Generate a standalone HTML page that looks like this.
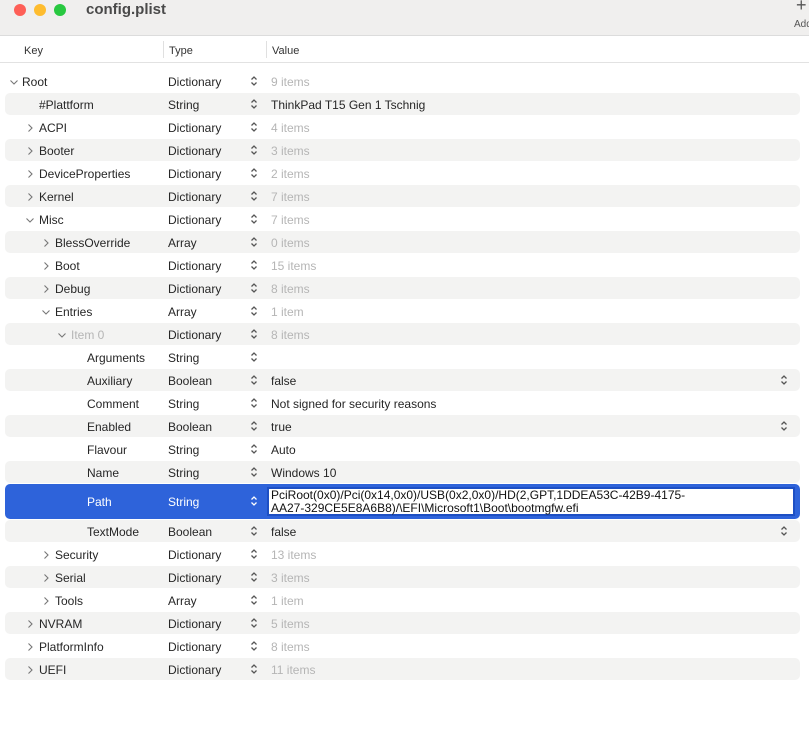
<!DOCTYPE html>
<html><head><meta charset="utf-8"><style>
*{margin:0;padding:0;box-sizing:border-box}
body{width:809px;height:736px;background:#fff;font-family:"Liberation Sans",sans-serif;font-size:12px;color:#262626;position:relative;overflow:hidden}
.tb{position:absolute;left:0;top:0;width:809px;height:36px;background:#f0efee;border-bottom:1px solid #dcdcdc}
.dot{position:absolute;top:4px;width:12px;height:12px;border-radius:50%}
.title{position:absolute;left:86px;top:1px;font-size:15px;font-weight:bold;color:#4a4a4a}
.hdr{position:absolute;top:37px;left:0;width:809px;height:26px;border-bottom:1px solid #e2e2e2}
.hdr span{position:absolute;top:7px;font-size:11px;color:#333}
.sep{position:absolute;top:4px;width:1px;height:17px;background:#e0e0e0}
.r{position:absolute;left:5px;width:795px;height:22px}
.g{background:#f3f3f2;border-radius:5px}
.r span{position:absolute;top:5px;white-space:nowrap}
.t{left:163px}
.v{left:266px}
.gr{color:#b5b5b5}
.ar{position:absolute;top:7px;width:10px;height:10px}
.st{position:absolute;left:245px;top:5px}
.dd{position:absolute;left:775px;top:5px}
</style></head><body>
<div class="tb">
<div class="dot" style="left:14px;background:#fe5f57"></div>
<div class="dot" style="left:34px;background:#febc2e"></div>
<div class="dot" style="left:54px;background:#28c840"></div>
<div class="title">config.plist</div>
<div style="position:absolute;left:796px;top:-5px;font-size:18px;color:#555">+</div>
<div style="position:absolute;left:794px;top:19px;font-size:10px;color:#555">Add</div>
</div>
<div class="hdr"><span style="left:24px;top:8px">Key</span><div class="sep" style="left:163px"></div><span style="left:169px;top:8px">Type</span><div class="sep" style="left:266px"></div><span style="left:272px;top:8px">Value</span></div>

<svg width="0" height="0" style="position:absolute"><defs>
<symbol id="s" viewBox="0 0 8 12"><path d="M1.5 4.5L4 2L6.5 4.5M1.5 7.5L4 10L6.5 7.5" fill="none" stroke="#555" stroke-width="1.3"/></symbol>
<symbol id="w" viewBox="0 0 8 12"><path d="M1.5 4.5L4 2L6.5 4.5M1.5 7.5L4 10L6.5 7.5" fill="none" stroke="#fff" stroke-width="1.3"/></symbol>
<symbol id="c" viewBox="0 0 10 10"><path d="M3.5 1.5L7 5L3.5 8.5" fill="none" stroke="#777" stroke-width="1.1"/></symbol>
<symbol id="o" viewBox="0 0 10 10"><path d="M1.5 3.5L5 7L8.5 3.5" fill="none" stroke="#777" stroke-width="1.1"/></symbol>
</defs></svg>

<div class="r" style="top:70px"><svg class="ar" style="left:4px"><use href="#o"/></svg><span style="left:17px">Root</span><span class="t">Dictionary</span><svg class="st" width="8" height="12"><use href="#s"/></svg><span class="v gr">9 items</span></div>
<div class="r g" style="top:93px"><span style="left:34px">#Plattform</span><span class="t">String</span><svg class="st" width="8" height="12"><use href="#s"/></svg><span class="v">ThinkPad T15 Gen 1 Tschnig</span></div>
<div class="r" style="top:116px"><svg class="ar" style="left:20px"><use href="#c"/></svg><span style="left:34px">ACPI</span><span class="t">Dictionary</span><svg class="st" width="8" height="12"><use href="#s"/></svg><span class="v gr">4 items</span></div>
<div class="r g" style="top:139px"><svg class="ar" style="left:20px"><use href="#c"/></svg><span style="left:34px">Booter</span><span class="t">Dictionary</span><svg class="st" width="8" height="12"><use href="#s"/></svg><span class="v gr">3 items</span></div>
<div class="r" style="top:162px"><svg class="ar" style="left:20px"><use href="#c"/></svg><span style="left:34px">DeviceProperties</span><span class="t">Dictionary</span><svg class="st" width="8" height="12"><use href="#s"/></svg><span class="v gr">2 items</span></div>
<div class="r g" style="top:185px"><svg class="ar" style="left:20px"><use href="#c"/></svg><span style="left:34px">Kernel</span><span class="t">Dictionary</span><svg class="st" width="8" height="12"><use href="#s"/></svg><span class="v gr">7 items</span></div>
<div class="r" style="top:208px"><svg class="ar" style="left:20px"><use href="#o"/></svg><span style="left:34px">Misc</span><span class="t">Dictionary</span><svg class="st" width="8" height="12"><use href="#s"/></svg><span class="v gr">7 items</span></div>
<div class="r g" style="top:231px"><svg class="ar" style="left:36px"><use href="#c"/></svg><span style="left:50px">BlessOverride</span><span class="t">Array</span><svg class="st" width="8" height="12"><use href="#s"/></svg><span class="v gr">0 items</span></div>
<div class="r" style="top:254px"><svg class="ar" style="left:36px"><use href="#c"/></svg><span style="left:50px">Boot</span><span class="t">Dictionary</span><svg class="st" width="8" height="12"><use href="#s"/></svg><span class="v gr">15 items</span></div>
<div class="r g" style="top:277px"><svg class="ar" style="left:36px"><use href="#c"/></svg><span style="left:50px">Debug</span><span class="t">Dictionary</span><svg class="st" width="8" height="12"><use href="#s"/></svg><span class="v gr">8 items</span></div>
<div class="r" style="top:300px"><svg class="ar" style="left:36px"><use href="#o"/></svg><span style="left:50px">Entries</span><span class="t">Array</span><svg class="st" width="8" height="12"><use href="#s"/></svg><span class="v gr">1 item</span></div>
<div class="r g" style="top:323px"><svg class="ar" style="left:52px"><use href="#o"/></svg><span class="gr" style="left:66px">Item 0</span><span class="t">Dictionary</span><svg class="st" width="8" height="12"><use href="#s"/></svg><span class="v gr">8 items</span></div>
<div class="r" style="top:346px"><span style="left:82px">Arguments</span><span class="t">String</span><svg class="st" width="8" height="12"><use href="#s"/></svg></div>
<div class="r g" style="top:369px"><span style="left:82px">Auxiliary</span><span class="t">Boolean</span><svg class="st" width="8" height="12"><use href="#s"/></svg><span class="v">false</span><svg class="dd" width="8" height="12"><use href="#s"/></svg></div>
<div class="r" style="top:392px"><span style="left:82px">Comment</span><span class="t">String</span><svg class="st" width="8" height="12"><use href="#s"/></svg><span class="v">Not signed for security reasons</span></div>
<div class="r g" style="top:415px"><span style="left:82px">Enabled</span><span class="t">Boolean</span><svg class="st" width="8" height="12"><use href="#s"/></svg><span class="v">true</span><svg class="dd" width="8" height="12"><use href="#s"/></svg></div>
<div class="r" style="top:438px"><span style="left:82px">Flavour</span><span class="t">String</span><svg class="st" width="8" height="12"><use href="#s"/></svg><span class="v">Auto</span></div>
<div class="r g" style="top:461px"><span style="left:82px">Name</span><span class="t">String</span><svg class="st" width="8" height="12"><use href="#s"/></svg><span class="v">Windows 10</span></div>
<div class="r" style="top:484px;height:35px;background:#2e63da;border-radius:5px;color:#fff"><span style="left:82px;top:11px">Path</span><span class="t" style="top:11px">String</span><svg class="st" style="top:11px" width="8" height="12"><use href="#w"/></svg>
<div style="position:absolute;left:262px;top:3px;width:528px;height:29px;background:#fff;border:2px solid #1d4fc4;color:#111;font-size:12px;line-height:12.5px;padding:0 2px">PciRoot(0x0)/Pci(0x14,0x0)/USB(0x2,0x0)/HD(2,GPT,1DDEA53C-42B9-4175-<br>AA27-329CE5E8A6B8)/\EFI\Microsoft1\Boot\bootmgfw.efi</div></div>
<div class="r g" style="top:520px"><span style="left:82px">TextMode</span><span class="t">Boolean</span><svg class="st" width="8" height="12"><use href="#s"/></svg><span class="v">false</span><svg class="dd" width="8" height="12"><use href="#s"/></svg></div>
<div class="r" style="top:543px"><svg class="ar" style="left:36px"><use href="#c"/></svg><span style="left:50px">Security</span><span class="t">Dictionary</span><svg class="st" width="8" height="12"><use href="#s"/></svg><span class="v gr">13 items</span></div>
<div class="r g" style="top:566px"><svg class="ar" style="left:36px"><use href="#c"/></svg><span style="left:50px">Serial</span><span class="t">Dictionary</span><svg class="st" width="8" height="12"><use href="#s"/></svg><span class="v gr">3 items</span></div>
<div class="r" style="top:589px"><svg class="ar" style="left:36px"><use href="#c"/></svg><span style="left:50px">Tools</span><span class="t">Array</span><svg class="st" width="8" height="12"><use href="#s"/></svg><span class="v gr">1 item</span></div>
<div class="r g" style="top:612px"><svg class="ar" style="left:20px"><use href="#c"/></svg><span style="left:34px">NVRAM</span><span class="t">Dictionary</span><svg class="st" width="8" height="12"><use href="#s"/></svg><span class="v gr">5 items</span></div>
<div class="r" style="top:635px"><svg class="ar" style="left:20px"><use href="#c"/></svg><span style="left:34px">PlatformInfo</span><span class="t">Dictionary</span><svg class="st" width="8" height="12"><use href="#s"/></svg><span class="v gr">8 items</span></div>
<div class="r g" style="top:658px"><svg class="ar" style="left:20px"><use href="#c"/></svg><span style="left:34px">UEFI</span><span class="t">Dictionary</span><svg class="st" width="8" height="12"><use href="#s"/></svg><span class="v gr">11 items</span></div>
</body></html>
